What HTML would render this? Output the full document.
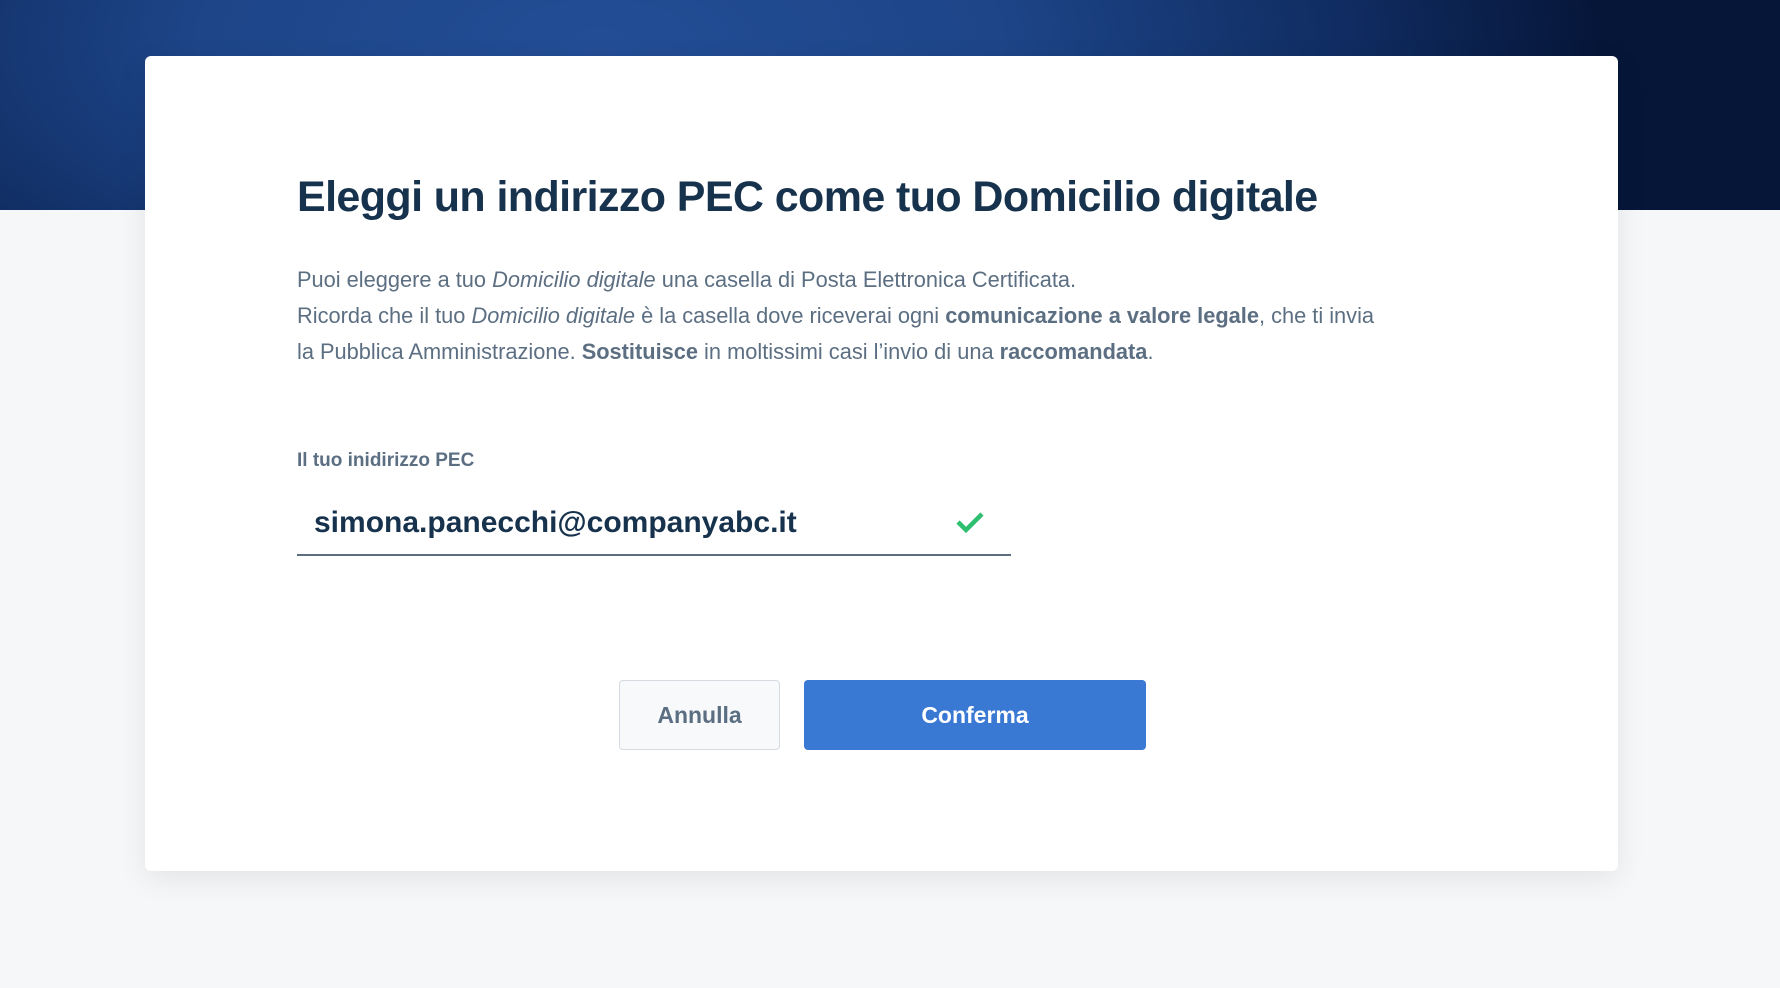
<!DOCTYPE html>
<html><head><meta charset="utf-8"><style>
html,body{margin:0;padding:0;width:1780px;height:988px;overflow:hidden;background:#f6f7f9;font-family:"Liberation Sans",sans-serif;}
.band{position:absolute;left:0;top:0;width:1780px;height:210px;background:radial-gradient(ellipse 1000px 420px at 600px 40px,#234e96 0%,#1d4588 40%,#102c61 75%,#061639 100%);}
.card{position:absolute;left:145px;top:56px;width:1473px;height:815px;background:#fff;border-radius:6px;box-shadow:0 8px 30px rgba(0,0,0,0.08);}
h1{position:absolute;left:152px;top:117px;margin:0;font-size:43px;font-weight:bold;color:#17324d;letter-spacing:-0.6px;}
.p{position:absolute;left:152px;top:206px;width:1100px;font-size:21.8px;line-height:36px;color:#5c6f82;}
.p b{color:#5c6f82;}
.lbl{position:absolute;left:152px;top:394px;font-size:19px;font-weight:bold;color:#5c6f82;}
.inp{position:absolute;left:152px;top:442px;width:714px;height:56px;border-bottom:2px solid #5c6f82;}
.inp span{position:absolute;left:17px;top:8px;font-size:30px;font-weight:bold;color:#17324d;}
.inp svg{position:absolute;left:658px;top:12px;}
.btn{position:absolute;top:624px;height:70px;border-radius:4px;font-size:23px;font-weight:bold;display:flex;align-items:center;justify-content:center;box-sizing:border-box;}
.a{left:474px;width:161px;background:#f8f9fb;border:1px solid #d5dbe1;color:#5c6f82;}
.c{left:659px;width:342px;background:#3a79d3;color:#fff;}
</style></head><body>
<div class="band"></div>
<div class="card">
<h1>Eleggi un indirizzo PEC come tuo Domicilio digitale</h1>
<div class="p">Puoi eleggere a tuo <i>Domicilio digitale</i> una casella di Posta Elettronica Certificata.<br>Ricorda che il tuo <i>Domicilio digitale</i> è la casella dove riceverai ogni <b>comunicazione a valore legale</b>, che ti invia la Pubblica Amministrazione. <b>Sostituisce</b> in moltissimi casi l’invio di una <b>raccomandata</b>.</div>
<div class="lbl">Il tuo inidirizzo PEC</div>
<div class="inp"><span>simona.panecchi@companyabc.it</span>
<svg width="30" height="24" viewBox="0 0 30 24"><path d="M3 12 L11 20 L27 4" fill="none" stroke="#2fbf71" stroke-width="4.5"/></svg></div>
<div class="btn a">Annulla</div>
<div class="btn c">Conferma</div>
</div>
</body></html>
